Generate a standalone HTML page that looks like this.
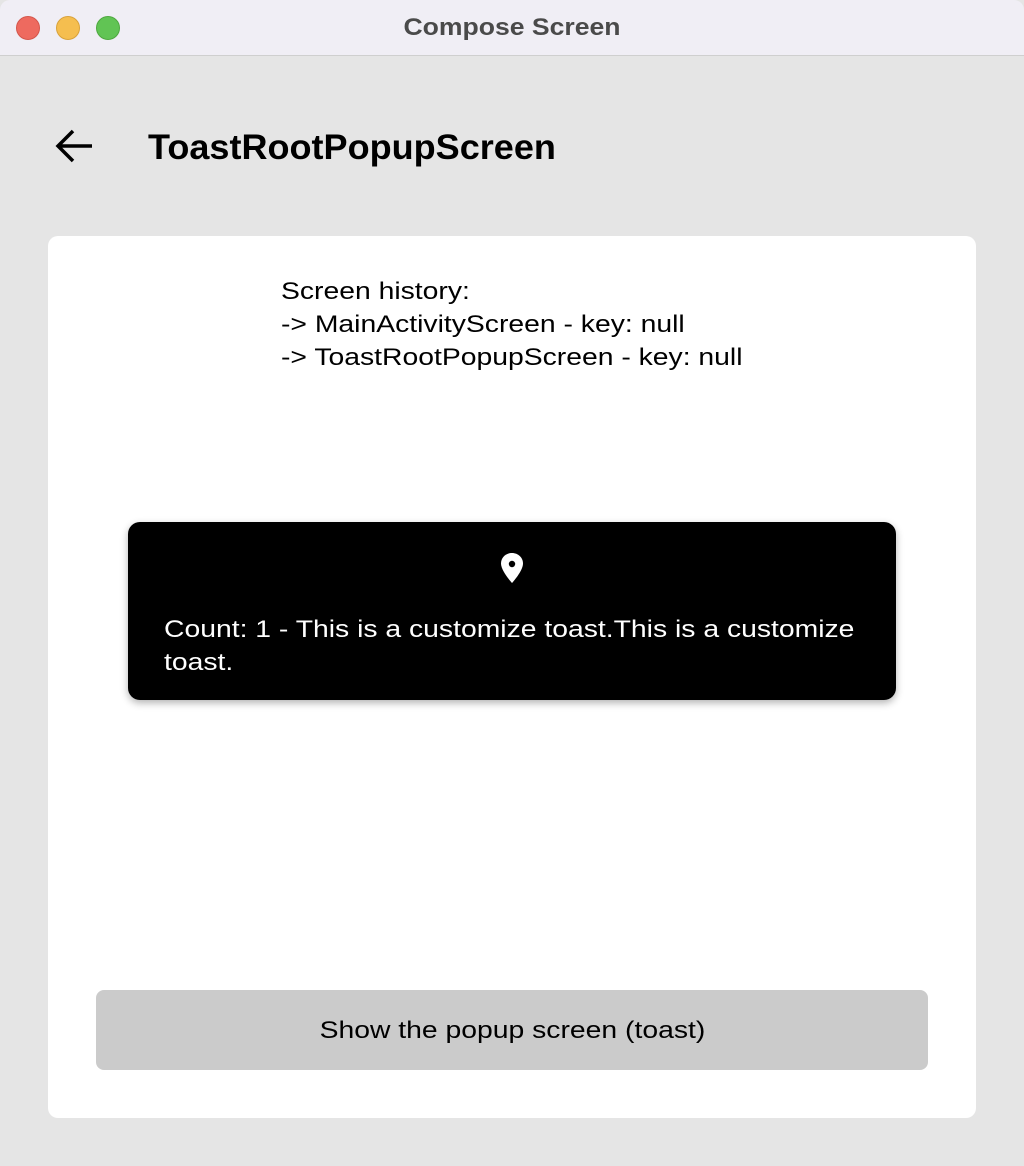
<!DOCTYPE html>
<html><head><style>
*{margin:0;padding:0;box-sizing:border-box}
body{width:1024px;height:1166px;background:#e5e5e5;font-family:"Liberation Sans",Arial,sans-serif;position:relative;overflow:hidden}
.tb{position:absolute;left:0;top:0;width:1024px;height:56px;background:#f0eef5;border-bottom:1px solid #cfcfcf;border-radius:10px 10px 0 0}
.dot{position:absolute;top:16px;width:24px;height:24px;border-radius:50%}
.title{position:absolute;top:14px;width:100%;text-align:center;font-size:24px;font-weight:bold;color:#4a4a4a;transform:scaleX(1.107)}
.h{position:absolute;left:148px;top:128px;font-size:35px;font-weight:bold;color:#000;transform:scaleX(1.03);transform-origin:left}
.card{position:absolute;left:48px;top:236px;width:928px;height:882px;background:#fff;border-radius:10px}
.hist{position:absolute;left:281px;top:275px;font-size:24px;line-height:33px;color:#000;transform:scaleX(1.18);transform-origin:left;white-space:nowrap}
.toast{position:absolute;left:128px;top:522px;width:768px;height:178px;background:#000;border-radius:12px;box-shadow:0 3px 8px rgba(0,0,0,.3)}
.tt{position:absolute;left:36px;top:91px;width:610px;font-size:24px;line-height:33px;color:#fff;transform:scaleX(1.18);transform-origin:left}
.btn{position:absolute;left:96px;top:990px;width:832px;height:80px;background:#cbcbcb;border-radius:8px;text-align:center;line-height:82px;font-size:24px;color:#000}
.btn span{display:inline-block;transform:scaleX(1.18)}
</style></head><body>
<div class="tb">
<div class="dot" style="left:16px;background:#ee6a5f;border:1px solid #d4564b"></div>
<div class="dot" style="left:56px;background:#f5be4f;border:1px solid #d9a23a"></div>
<div class="dot" style="left:96px;background:#61c454;border:1px solid #4ea83f"></div>
<div class="title">Compose Screen</div>
</div>
<svg style="position:absolute;left:54px;top:128px" width="40" height="36" viewBox="0 0 40 36"><path d="M38 18H4M19 3L4 18l15 15" stroke="#000" stroke-width="3.5" fill="none"/></svg>
<div class="h">ToastRootPopupScreen</div>
<div class="card"></div>
<div class="hist">Screen history:<br>-&gt; MainActivityScreen - key: null<br>-&gt; ToastRootPopupScreen - key: null</div>
<div class="toast">
<svg style="position:absolute;left:370px;top:30px" width="28" height="32" viewBox="0 0 28 32"><path d="M14 1C8 1 3 5.5 3 11.5c0 7.5 11 19.5 11 19.5s11-12 11-19.5C25 5.5 20 1 14 1z" fill="#fff"/><circle cx="14" cy="12" r="3.2" fill="#000"/></svg>
<div class="tt">Count: 1 - This is a customize toast.This is a customize toast.</div>
</div>
<div class="btn"><span>Show the popup screen (toast)</span></div>
</body></html>
